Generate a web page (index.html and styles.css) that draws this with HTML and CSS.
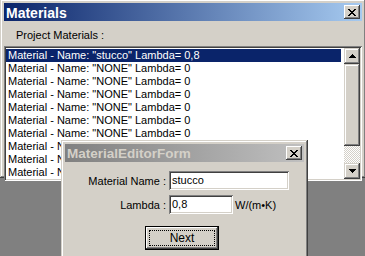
FILE: index.html
```html
<!DOCTYPE html>
<html lang="en">
<head>
    <meta charset="UTF-8">
    <title>Materials</title>
    <link rel="stylesheet" href="styles.css">
</head>
<body>
    <div class="desktop">
        <!-- main window -->
        <div class="window main-window">
            <div class="titlebar active">
                <span class="title">Materials</span>
                <span class="close-btn">
                    <svg width="8" height="7" viewBox="0 0 8 7" shape-rendering="crispEdges">
                        <path d="M0 0h2v1h-2z M6 0h2v1h-2z M1 1h2v1h-2z M5 1h2v1h-2z M2 2h4v1h-4z M3 3h2v1h-2z M2 4h4v1h-4z M1 5h2v1h-2z M5 5h2v1h-2z M0 6h2v1h-2z M6 6h2v1h-2z" fill="#000"/>
                    </svg>
                </span>
            </div>
            <div class="client">
                <div class="group-label">Project Materials :</div>
                <div class="listbox">
                    <ul class="items">
                        <li class="selected">Material - Name: &quot;stucco&quot; Lambda= 0,8</li>
                        <li>Material - Name: &quot;NONE&quot; Lambda= 0</li>
                        <li>Material - Name: &quot;NONE&quot; Lambda= 0</li>
                        <li>Material - Name: &quot;NONE&quot; Lambda= 0</li>
                        <li>Material - Name: &quot;NONE&quot; Lambda= 0</li>
                        <li>Material - Name: &quot;NONE&quot; Lambda= 0</li>
                        <li>Material - Name: &quot;NONE&quot; Lambda= 0</li>
                        <li>Material - Name: &quot;NONE&quot; Lambda= 0</li>
                        <li>Material - Name: &quot;NONE&quot; Lambda= 0</li>
                        <li>Material - Name: &quot;NONE&quot; Lambda= 0</li>
                    </ul>
                    <div class="vscroll">
                        <div class="sb-btn">
                            <svg width="7" height="4" viewBox="0 0 7 4" shape-rendering="crispEdges">
                                <path d="M3 0h1v1h-1z M2 1h3v1h-3z M1 2h5v1h-5z M0 3h7v1h-7z" fill="#000"/>
                            </svg>
                        </div>
                        <div class="sb-thumb"></div>
                        <div class="sb-track"></div>
                        <div class="sb-btn">
                            <svg width="7" height="4" viewBox="0 0 7 4" shape-rendering="crispEdges">
                                <path d="M0 0h7v1h-7z M1 1h5v1h-5z M2 2h3v1h-3z M3 3h1v1h-1z" fill="#000"/>
                            </svg>
                        </div>
                    </div>
                </div>
            </div>
        </div>

        <!-- editor dialog -->
        <div class="window dialog">
            <div class="titlebar inactive">
                <span class="title">MaterialEditorForm</span>
                <span class="close-btn">
                    <svg width="8" height="7" viewBox="0 0 8 7" shape-rendering="crispEdges">
                        <path d="M0 0h2v1h-2z M6 0h2v1h-2z M1 1h2v1h-2z M5 1h2v1h-2z M2 2h4v1h-4z M3 3h2v1h-2z M2 4h4v1h-4z M1 5h2v1h-2z M5 5h2v1h-2z M0 6h2v1h-2z M6 6h2v1h-2z" fill="#000"/>
                    </svg>
                </span>
            </div>
            <div class="dialog-body">
                <div class="form-grid">
                    <label class="field-label">Material Name :</label>
                    <div class="field"><span class="textbox wide">stucco</span></div>
                    <label class="field-label">Lambda :</label>
                    <div class="field">
                        <span class="textbox narrow">0,8</span>
                        <span class="unit">W/(m•K)</span>
                    </div>
                </div>
                <div class="button-row">
                    <div class="push-btn default"><span class="focus">Next</span></div>
                </div>
            </div>
        </div>
    </div>
</body>
</html>
```

FILE: styles.css
```css
body {
    margin: 0;
    background-color: #808080;
    font-family: 'Liberation Sans', Arial, sans-serif;
    font-size: 11px;
    color: #000;
    overflow: hidden;
}
.desktop {
    position: relative;
    width: 365px;
    height: 256px;
    overflow: hidden;
}

/* window frames */
.window {
    position: absolute;
    box-sizing: border-box;
    display: flex;
    flex-direction: column;
    padding: 4px;
    background-color: #d4d0c8;
    box-shadow: inset -1px -1px #404040, inset 1px 1px #d4d0c8,
                inset -2px -2px #808080, inset 2px 2px #fff;
}
.main-window {
    left: 0;
    top: -1px;
    width: 366px;
    height: 179px;
}
.dialog {
    left: 61px;
    top: 140px;
    width: 247px;
    height: 130px;
}

.titlebar {
    height: 18px;
    flex: none;
    display: flex;
    align-items: center;
    padding: 0 2px;
}
.titlebar.active {
    background: linear-gradient(to right, #0a246a, #a6caf0);
}
.titlebar.inactive {
    background: linear-gradient(to right, #808080, #c0c0c0);
}
.title {
    flex: 1;
    font-size: 14px;
    font-weight: bold;
    line-height: 18px;
    padding-top: 1px;
    color: #fff;
    white-space: nowrap;
}
.inactive .title {
    color: #d4d0c8;
    font-size: 13.5px;
}
.close-btn {
    width: 16px;
    height: 14px;
    display: flex;
    justify-content: center;
    align-items: center;
    background-color: #d4d0c8;
    box-shadow: inset -1px -1px #404040, inset 1px 1px #fff,
                inset -2px -2px #808080;
}

/* main window content */
.client {
    flex: 1;
    display: flex;
    flex-direction: column;
}
.group-label {
    height: 25px;
    box-sizing: border-box;
    padding: 8px 0 0 12px;
    line-height: 13px;
}
.listbox {
    flex: 1;
    display: flex;
    padding: 2px;
    background-color: #fff;
    box-shadow: inset 1px 1px #808080, inset -1px -1px #fff,
                inset 2px 2px #404040, inset -2px -2px #d4d0c8;
    overflow: hidden;
}
.items {
    flex: 1;
    margin: 1px 3px 0 0;
    padding: 0;
    list-style: none;
    overflow: hidden;
}
.items li {
    height: 13px;
    line-height: 13px;
    padding-left: 2px;
    white-space: nowrap;
}
.items li.selected {
    background-color: #0a246a;
    color: #fff;
}

.vscroll {
    width: 16px;
    display: flex;
    flex-direction: column;
}
.sb-btn,
.sb-thumb {
    background-color: #d4d0c8;
    box-shadow: inset -1px -1px #404040, inset 1px 1px #d4d0c8,
                inset -2px -2px #808080, inset 2px 2px #fff;
}
.sb-btn {
    height: 16px;
    display: flex;
    justify-content: center;
    align-items: center;
}
.sb-thumb {
    height: 82px;
}
.sb-track {
    flex: 1;
    background-image: conic-gradient(#fff 25%, #d4d0c8 0 50%, #fff 0 75%, #d4d0c8 0);
    background-size: 2px 2px;
}

/* dialog content */
.dialog-body {
    padding-top: 9px;
}
.form-grid {
    display: grid;
    grid-template-columns: 101px auto;
    column-gap: 3px;
    row-gap: 5px;
    align-items: center;
}
.field-label {
    text-align: right;
    white-space: nowrap;
}
.field {
    display: flex;
    align-items: center;
}
.textbox {
    box-sizing: border-box;
    height: 19px;
    line-height: 15px;
    padding: 2px 3px;
    background-color: #fff;
    box-shadow: inset 1px 1px #808080, inset -1px -1px #fff,
                inset 2px 2px #404040, inset -2px -2px #d4d0c8;
}
.textbox.wide {
    width: 120px;
}
.textbox.narrow {
    width: 64px;
}
.unit {
    margin-left: 2px;
}
.button-row {
    padding: 12px 0 0 80px;
}
.push-btn {
    box-sizing: border-box;
    width: 74px;
    height: 24px;
    padding: 4px;
    background-color: #d4d0c8;
    box-shadow: inset -1px -1px #404040, inset 1px 1px #fff,
                inset -2px -2px #808080;
}
.push-btn.default {
    box-shadow: inset 0 0 0 1px #000, inset -2px -2px #404040,
                inset 2px 2px #fff, inset -3px -3px #808080;
}
.focus {
    display: block;
    height: 100%;
    box-sizing: border-box;
    border: 1px dotted #000;
    text-align: center;
    line-height: 14px;
    font-size: 12px;
}
```
